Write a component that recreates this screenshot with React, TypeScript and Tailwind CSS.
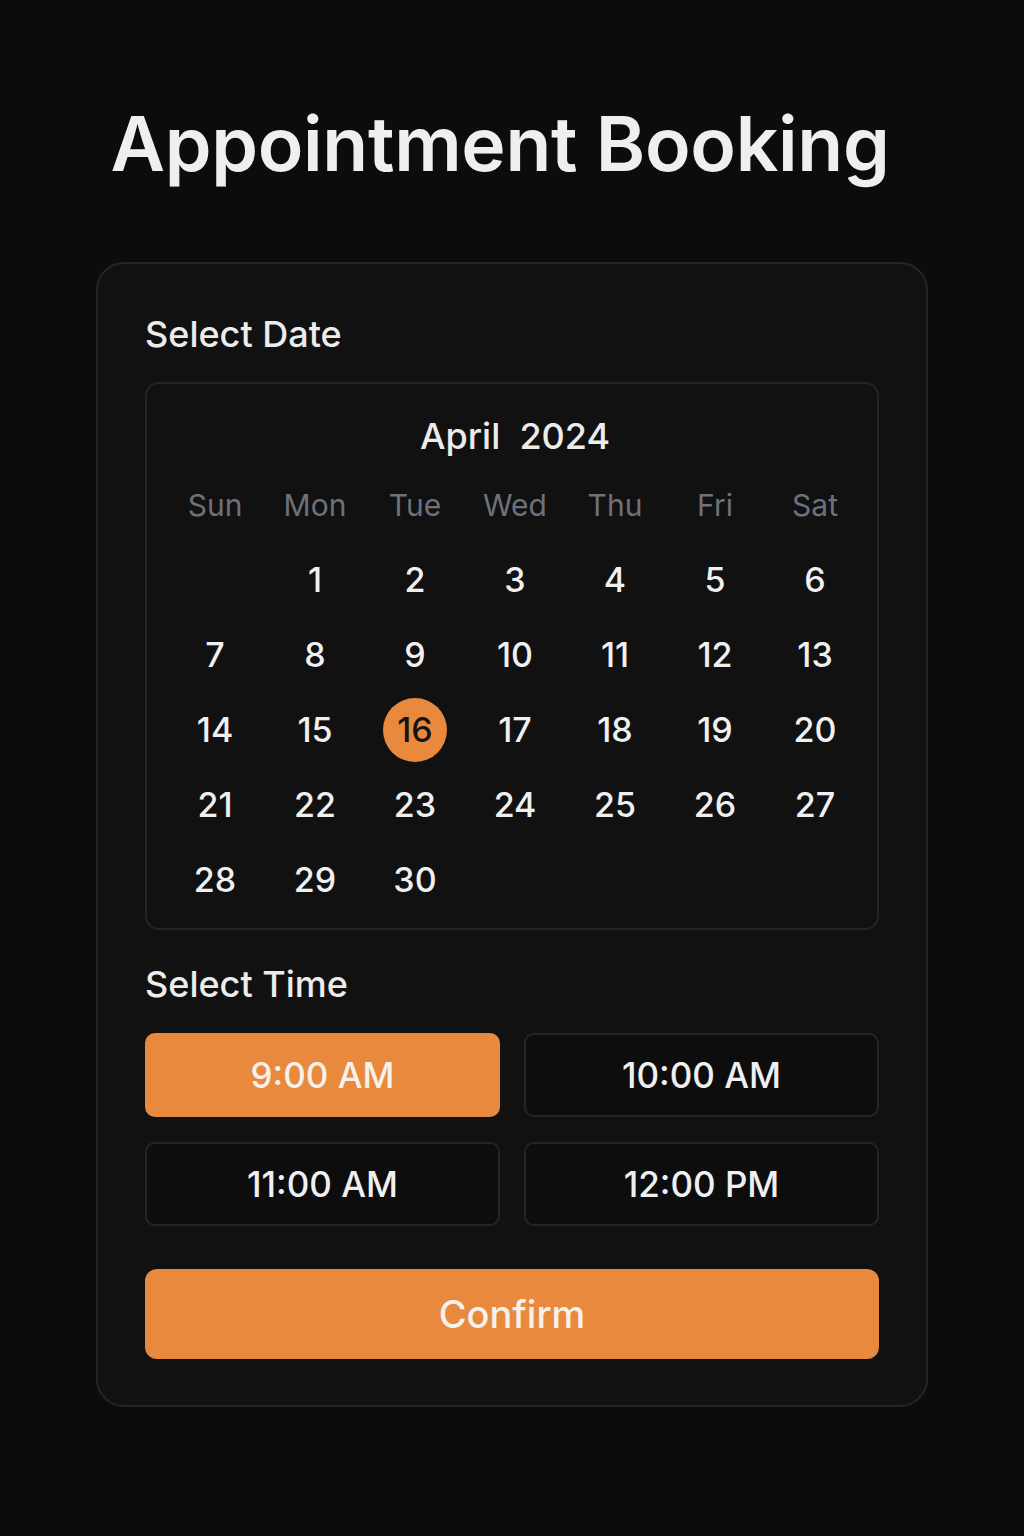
import React from "react";

const weekdays = ["Sun", "Mon", "Tue", "Wed", "Thu", "Fri", "Sat"];
const times = ["9:00 AM", "10:00 AM", "11:00 AM", "12:00 PM"];

export default function App() {
  // April 2024 starts on a Monday
  const cells: (number | null)[] = [null];
  for (let d = 1; d <= 30; d++) cells.push(d);
  const selectedDay = 16;
  const selectedTime = "9:00 AM";

  return (
    <div className="min-h-screen w-full bg-[#0c0c0c] font-['Inter',sans-serif] text-[#f2f2f2]">
      <div className="mx-auto w-[832px] pt-[96px] pb-[128px]">
        <h1 className="pr-[24px] text-center text-[75px] font-semibold leading-[96px] tracking-[-0.3px] text-[#efefef]">
          Appointment Booking
        </h1>

        <div className="mt-[70px] rounded-[28px] border-2 border-[#252528] bg-[#111112] px-[47px] pt-[46px] pb-[46px]">
          <h2 className="text-[36px] font-medium leading-[48px] text-[#ececec]">Select Date</h2>

          <div className="mt-[24px] rounded-[14px] border-2 border-[#252528] pl-[18px] pr-[12px] pt-[28px] pb-[11px]">
            <div className="text-center text-[36px] font-medium leading-[48px] text-[#ececec]">April&nbsp; 2024</div>

            <div className="mt-[25px] grid grid-cols-7">
              {weekdays.map((w) => (
                <div key={w} className="text-center text-[30px] leading-[40px] text-[#6e717a]">
                  {w}
                </div>
              ))}
            </div>

            <div className="mt-[17px] grid grid-cols-7">
              {cells.map((d, i) => (
                <div key={i} className="flex h-[75px] items-center justify-center">
                  {d === null ? null : d === selectedDay ? (
                    <div className="flex h-[64px] w-[64px] items-center justify-center rounded-full bg-[#e8893d] text-[34px] font-medium text-[#141414]">
                      {d}
                    </div>
                  ) : (
                    <span className="text-[34px] font-medium text-[#f0f0f0]">{d}</span>
                  )}
                </div>
              ))}
            </div>
          </div>

          <h2 className="mt-[30px] text-[36px] font-medium leading-[48px] text-[#ececec]">Select Time</h2>

          <div className="mt-[25px] grid grid-cols-2 gap-x-[24px] gap-y-[25px]">
            {times.map((t) =>
              t === selectedTime ? (
                <button
                  key={t}
                  className="flex h-[84px] items-center justify-center rounded-[10px] bg-[#e8893d] text-[35px] font-medium text-[#f6f1ea]"
                >
                  {t}
                </button>
              ) : (
                <button
                  key={t}
                  className="flex h-[84px] items-center justify-center rounded-[10px] border-2 border-[#252528] bg-[#0d0d0e] text-[35px] font-medium text-[#f0f0f0]"
                >
                  {t}
                </button>
              )
            )}
          </div>

          <button className="mt-[43px] flex h-[90px] w-full items-center justify-center rounded-[12px] bg-[#e8893d] text-[38px] font-medium text-[#f6f1ea]">
            Confirm
          </button>
        </div>
      </div>
    </div>
  );
}
